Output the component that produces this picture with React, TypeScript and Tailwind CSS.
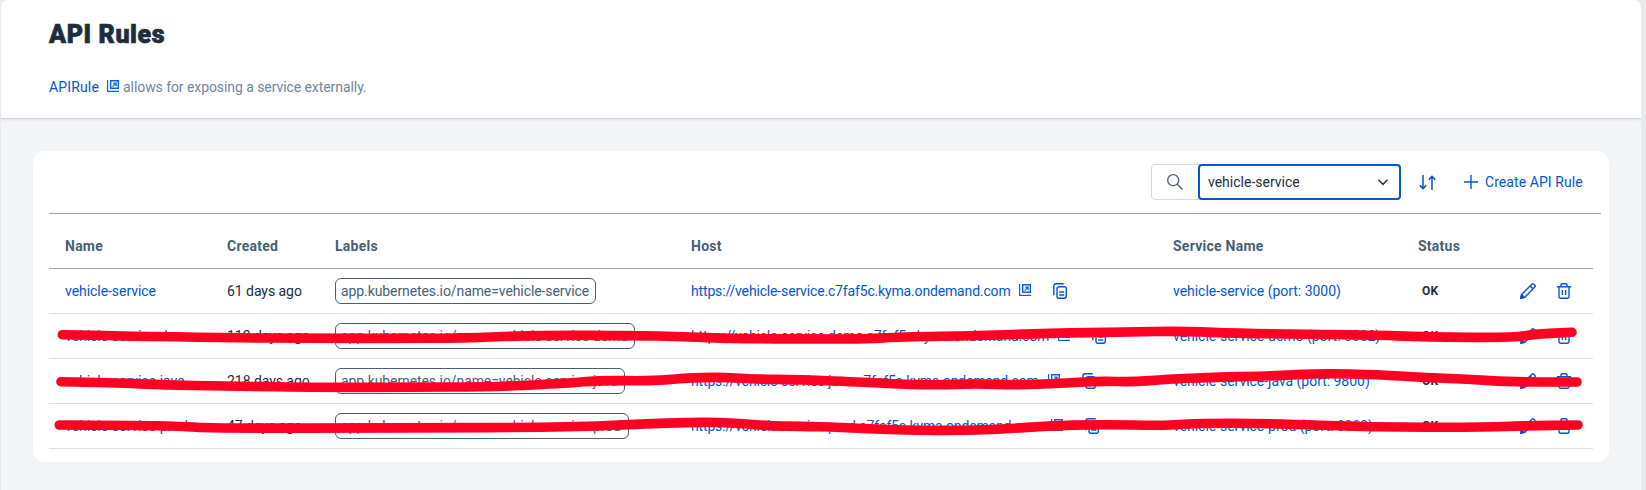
import React from 'react';

const rows = [
  { name: 'vehicle-service', created: '61 days ago', label: 'app.kubernetes.io/name=vehicle-service', labelW: 'w-[261px]', host: 'https://vehicle-service.c7faf5c.kyma.ondemand.com', hostW: 'w-[320px]', svc: 'vehicle-service (port: 3000)' },
  { name: 'vehicle-service-demo', created: '112 days ago', label: 'app.kubernetes.io/name=vehicle-service-demo', labelW: 'w-[300px]', host: 'https://vehicle-service-demo.c7faf5c.kyma.ondemand.com', hostW: 'w-[359px]', svc: 'vehicle-service-demo (port: 8002)' },
  { name: 'vehicle-service-java', created: '218 days ago', label: 'app.kubernetes.io/name=vehicle-service-java', labelW: 'w-[290px]', host: 'https://vehicle-service-java.c7faf5c.kyma.ondemand.com', hostW: 'w-[349px]', svc: 'vehicle-service-java (port: 9800)' },
  { name: 'vehicle-service-prod', created: '47 days ago', label: 'app.kubernetes.io/name=vehicle-service-prod', labelW: 'w-[294px]', host: 'https://vehicle-service-prod.c7faf5c.kyma.ondemand.com', hostW: 'w-[352px]', svc: 'vehicle-service-prod (port: 8080)' },
];

const strokes: [number, number][][] = [
  [[62.3, 334.8], [200, 337.6], [333, 338.5], [400, 338.3], [460, 338.3], [533, 335.3], [633, 335.5], [683, 336.5], [733, 338.7], [820, 339], [867, 339], [900, 336.7], [980, 335.7], [1047, 333.3], [1133, 332], [1178, 331], [1247, 333.7], [1367, 334.7], [1427, 337], [1513, 337.7], [1537, 334], [1572, 332.3]],
  [[61, 381.7], [113, 382.7], [167, 385], [220, 386], [333, 387.5], [400, 387.3], [500, 386.7], [567, 383.3], [600, 380.3], [653, 381], [683, 378.3], [720, 377], [750, 379], [800, 379.7], [867, 382.3], [900, 384.3], [940, 385], [973, 383.7], [1020, 385], [1067, 383], [1100, 381], [1133, 382], [1167, 379.3], [1213, 377.3], [1273, 376], [1320, 373.3], [1380, 374.7], [1420, 377.3], [1467, 379.3], [1513, 382], [1577, 382]],
  [[59.3, 425], [133, 425.3], [180, 426.3], [213, 428.3], [400, 428], [573, 427.3], [633, 424.3], [700, 422], [733, 423], [773, 426], [800, 426.3], [840, 427.3], [887, 429.7], [953, 430.7], [1000, 429.3], [1047, 426], [1100, 424.3], [1167, 425.7], [1193, 423.3], [1267, 423.3], [1373, 427.3], [1480, 427.3], [1527, 425.7], [1578, 425]],
];

function smooth(pts: [number, number][]) {
  let d = `M${pts[0][0]} ${pts[0][1]}`;
  for (let i = 1; i < pts.length - 1; i++) {
    const mx = (pts[i][0] + pts[i + 1][0]) / 2;
    const my = (pts[i][1] + pts[i + 1][1]) / 2;
    d += ` Q${pts[i][0]} ${pts[i][1]} ${mx} ${my}`;
  }
  const last = pts[pts.length - 1];
  return `${d} L${last[0]} ${last[1]}`;
}

const External = () => (
  <svg width="12" height="12" viewBox="0 0 12 12" fill="none" stroke="#0b5fe0" className="shrink-0">
    <path d="M.6 0v11.4H12" strokeWidth="1.2" />
    <path d="M3.7.7h7.6v7.6H3.7z" strokeWidth="1.4" />
    <path d="M5.6 6.6 8.8 3.4M6.2 3.1h2.9V6" strokeWidth="1.2" />
  </svg>
);

const Copy = () => (
  <svg width="14" height="16" viewBox="0 0 14 16" fill="none" stroke="#0057d2" strokeWidth="1.4" className="shrink-0">
    <path d="M.8 12.2V3.3A2.5 2.5 0 0 1 3.3.8h7.5M6 3.7h5.3a2 2 0 0 1 2 2v7.6a2 2 0 0 1-2 2H6a2 2 0 0 1-2-2V5.7a2 2 0 0 1 2-2zM6.2 9h5M6.2 12h5" />
  </svg>
);

const Pencil = () => (
  <svg width="16" height="16" viewBox="0 0 16 16" fill="none" stroke="#0057d2" strokeWidth="1.4" strokeLinejoin="round">
    <path d="M.8 15.2 1.6 11.4 11.9 1.2a1.3 1.3 0 0 1 1.8 0l1.1 1.1a1.3 1.3 0 0 1 0 1.8L4.6 14.4zM10.2 3l2.8 2.8" />
    <path d="M.8 15.2 1.6 11.6 4.4 14.4z" fill="#0057d2" />
  </svg>
);

const Trash = () => (
  <svg width="14" height="16" viewBox="0 0 14 16" fill="none" stroke="#0057d2" strokeWidth="1.4">
    <path d="M0 3.7h14M4 3.5V1.8a1 1 0 0 1 1-1h4a1 1 0 0 1 1 1v1.7M2 4v9.8a1.5 1.5 0 0 0 1.5 1.5h7a1.5 1.5 0 0 0 1.5-1.5V4M5.4 7v5M8.6 7v5" />
  </svg>
);

const grid = 'grid grid-cols-[162px_108px_356px_482px_245px_100px_1fr] pl-4 items-center';

export default function App() {
  return (
    <div className="relative h-[490px] w-[1646px] overflow-hidden bg-[#e8e9eb] font-[Roboto,'Liberation_Sans',sans-serif] text-[14px] text-[#1d2d3e]">
      <main className="ml-px h-full w-[1640px] overflow-hidden rounded-t-lg bg-[#f3f4f6]">
        <header className="h-[119px] border-b border-[#cfd3d6] bg-white pl-12 pt-[19px] shadow-[0_1px_2px_#e2e4e7]">
          <h1 className="text-[25px] font-black leading-8 tracking-[0.6px] [-webkit-text-stroke:0.7px_#1d2d3e]">API Rules</h1>
          <p className="mt-[26px] flex h-5 items-center tracking-[-0.07px] text-[#728499]">
            <a className="w-[50px] tracking-[0.15px] text-[#0057d2]">APIRule</a>
            <span className="ml-2 mr-1 pb-[3px]"><External /></span>
            allows for exposing a service externally.
          </p>
        </header>
        <section className="ml-8 mt-8 h-[311px] w-[1576px] rounded-xl bg-white pl-4 pr-2">
          <div className="flex h-[63px] items-center justify-end border-b border-[#9ba5b1] pr-[18px]">
            <div className="flex h-9 w-[250px] rounded border border-[#d5d8dc]">
              <div className="flex w-[46px] items-center justify-center">
                <svg width="16" height="16" viewBox="0 0 16 16" fill="none" stroke="#475e75" strokeWidth="1.3"><circle cx="6.2" cy="6.2" r="5.5" /><path d="m10.3 10.3 5.2 5.2" /></svg>
              </div>
              <div className="-my-px -mr-px flex w-[203px] items-center justify-between rounded border-2 border-[#0057d2] pl-2 pr-[11px]">
                vehicle-service
                <svg width="10" height="7" viewBox="0 0 10 7" fill="none" stroke="#1d2d3e" strokeWidth="1.4" strokeLinecap="round"><path d="m.8 1 4.2 4.4L9.2 1" /></svg>
              </div>
            </div>
            <svg width="17" height="15" viewBox="0 0 17 15" className="ml-[18px]" fill="none" stroke="#0057d2" strokeWidth="1.5"><path d="M4 0v13.5M.8 10.4 4 13.6l3.2-3.2M13 15V1.4M9.8 4.6 13 1.4l3.2 3.2" /></svg>
            <svg width="14" height="14" viewBox="0 0 14 14" className="ml-7" fill="none" stroke="#0057d2" strokeWidth="1.4"><path d="M7 0v14M0 7h14" /></svg>
            <span className="ml-[7px] w-[98px] whitespace-nowrap tracking-[0.07px] text-[#0057d2]">Create API Rule</span>
          </div>
          <div className="w-[1544px]">
            <div className={`${grid} h-[55px] border-b border-[#9ba5b1] pt-[10px] font-bold tracking-[0.25px] text-[#475e75]`}>
              <span>Name</span><span>Created</span><span>Labels</span><span>Host</span><span>Service Name</span><span>Status</span><span />
            </div>
            {rows.map((r) => (
              <div key={r.name} className={`${grid} h-[45px] whitespace-nowrap border-b border-[#dddfe1]`}>
                <a className="tracking-[-0.05px] text-[#0057d2]">{r.name}</a>
                <span className="tracking-[-0.05px]">{r.created}</span>
                <span className={`${r.labelW} h-[26px] rounded-md border border-[#475e75] pl-[5px] leading-6 tracking-[-0.09px] text-[#475e75]`}>{r.label}</span>
                <span className="flex items-center text-[#0057d2]">
                  <a className={`${r.hostW} tracking-[-0.16px]`}>{r.host}</a>
                  <span className="ml-2 mr-[22px] pb-[2px]"><External /></span>
                  <Copy />
                </span>
                <a className="tracking-[-0.03px] text-[#0057d2]">{r.svc}</a>
                <b className="pl-1 text-[12px] tracking-[0.3px]">OK</b>
                <span className="flex gap-[21px] pl-[2px]"><Pencil /><Trash /></span>
              </div>
            ))}
          </div>
        </section>
      </main>
      <svg className="pointer-events-none absolute inset-0" width="1646" height="490" fill="none" stroke="#ff0022" strokeWidth="9.6" strokeLinecap="round" strokeLinejoin="round">
        {strokes.map((s, i) => <path key={i} d={smooth(s)} />)}
      </svg>
    </div>
  );
}
